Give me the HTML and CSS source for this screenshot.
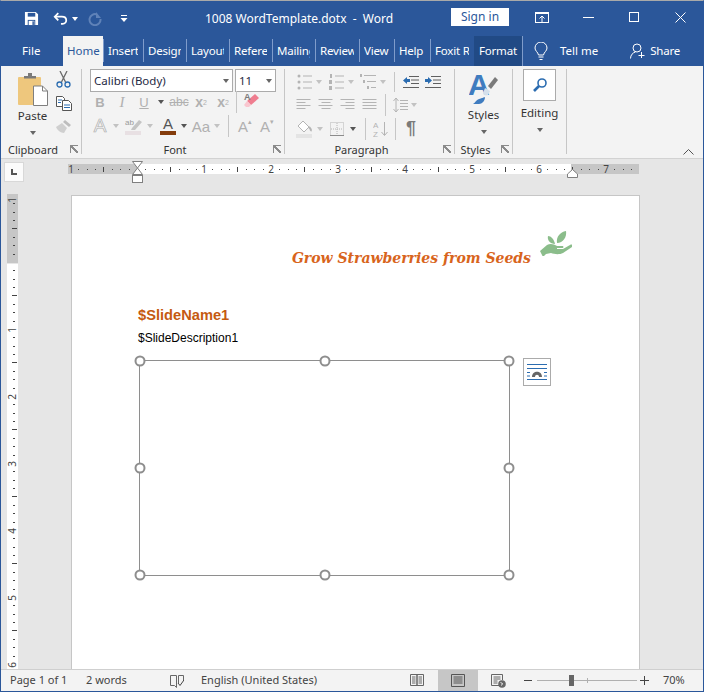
FILE: index.html
```html
<!DOCTYPE html>
<html lang="en">
<head>
    <meta charset="UTF-8">
    <title>1008 WordTemplate.dotx - Word</title>
    <link rel="stylesheet" href="styles.css">
</head>
<body>

<div class="window">

    <!-- title bar -->
    <div class="titlebar">
        <div class="quick">
            <svg class="q-save" width="15" height="15" viewBox="0 0 16 16"><path d="M1 1h11.500L15 3.500V15H1z" fill="#fff"/><rect x="4" y="2" width="8" height="4" fill="#2b579a"/><rect x="4" y="9.500" width="8" height="5.500" fill="#2b579a"/><rect x="5" y="10.500" width="6" height="4.500" fill="#fff"/><rect x="9" y="11" width="1.500" height="4" fill="#2b579a"/></svg>
            <svg class="q-undo" width="15" height="15" viewBox="0 0 17 16"><path d="M6 2L2 6l4 4" fill="none" stroke="#fff" stroke-width="2"/><path d="M2.500 6H10c3.500 0 5 2 5 4s-1.500 4-4 4H9" fill="none" stroke="#fff" stroke-width="2"/></svg>
            <span class="caret caret-white q-undo-caret"></span>
            <svg class="q-redo" width="14" height="14" viewBox="0 0 14 14"><path d="M9 2.500A5.500 5.500 0 1 0 12.500 7" fill="none" stroke="#5f82b8" stroke-width="2"/><path d="M8 0v6h5" fill="#5f82b8"/></svg>
            <svg class="q-more" width="8" height="8" viewBox="0 0 8 8"><rect x="1" y="0" width="6" height="1" fill="#fff"/><path d="M0.500 3h7L4 7z" fill="#fff"/></svg>
        </div>
        <div class="doc-title">1008 WordTemplate.dotx&nbsp; -&nbsp; Word</div>
        <div class="signin">Sign in</div>
        <div class="winctl winctl-ribbon">
            <svg width="14" height="11" viewBox="0 0 14 11"><rect x="0.500" y="0.500" width="13" height="10" fill="none" stroke="#fff"/><rect x="0" y="0" width="14" height="2" fill="#fff"/><path d="M7 10V4M4.500 6.500L7 4l2.500 2.500" fill="none" stroke="#fff"/></svg>
        </div>
        <div class="winctl winctl-min"><svg width="11" height="1" viewBox="0 0 11 1"><rect width="11" height="1" fill="#fff"/></svg></div>
        <div class="winctl winctl-max"><svg width="10" height="10" viewBox="0 0 10 10"><rect x="0.500" y="0.500" width="9" height="9" fill="none" stroke="#fff"/></svg></div>
        <div class="winctl winctl-close"><svg width="11" height="11" viewBox="0 0 11 11"><path d="M0.500 0.500l10 10M10.500 0.500l-10 10" stroke="#fff" fill="none"/></svg></div>
    </div>

    <!-- tabs -->
    <div class="tabs">
        <div class="tab tab-file">File</div>
        <div class="tab tab-home">Home</div>
        <div class="tab w40"><span class="tab-text">Insert</span></div>
        <div class="tab w43"><span class="tab-text">Design</span></div>
        <div class="tab w43"><span class="tab-text">Layout</span></div>
        <div class="tab w43"><span class="tab-text">References</span></div>
        <div class="tab w43"><span class="tab-text">Mailings</span></div>
        <div class="tab w44"><span class="tab-text">Review</span></div>
        <div class="tab w35"><span class="tab-text">View</span></div>
        <div class="tab w36"><span class="tab-text">Help</span></div>
        <div class="tab w44"><span class="tab-text">Foxit Reader</span></div>
        <div class="tab tab-format"><span class="tab-text">Format</span></div>
        <svg class="bulb" width="14" height="19" viewBox="0 0 14 19"><path d="M4.500 13C4 10 1 9 1 6a6 6 0 0 1 12 0c0 3-3 4-3.500 7z" fill="none" stroke="#fff"/><path d="M4.500 15h5M5.500 17.500h3" stroke="#fff" fill="none"/></svg>
        <div class="tell">Tell me</div>
        <svg class="person" width="16" height="16" viewBox="0 0 16 16"><circle cx="7" cy="5" r="4" fill="none" stroke="#fff"/><path d="M0.500 15.500c0-3.500 2.500-6 5-6.500M11.500 9v6M8.500 12.500h6" fill="none" stroke="#fff"/></svg>
        <div class="share">Share</div>
    </div>

    <!-- ribbon -->
    <div class="ribbon">

        <div class="group g-clipboard">
            <div class="group-body clip-body">
                <div class="paste">
                    <svg width="30" height="33" viewBox="0 0 30 33"><rect x="0" y="4" width="23" height="28" rx="1" fill="#eec77d"/><path d="M6 5V3h4V0h4v3h4v2.500H6z" fill="#7a7a7a"/><path d="M15.500 13h9l5 5v14.500h-14z" fill="#fff" stroke="#7f7f7f"/><path d="M24.500 13v5h5" fill="none" stroke="#7f7f7f"/></svg>
                    <div class="big-label">Paste</div>
                    <span class="caret"></span>
                </div>
                <div class="clip-small">
                    <svg width="15" height="17" viewBox="0 0 15 17"><path d="M4 0l5.500 11M11 0L5.500 11" stroke="#6b6b6b" stroke-width="1.300" fill="none"/><circle cx="3.500" cy="13.500" r="2.500" fill="none" stroke="#2b6cb0" stroke-width="1.300"/><circle cx="11.500" cy="13.500" r="2.500" fill="none" stroke="#2b6cb0" stroke-width="1.300"/></svg>
                    <svg width="16" height="15" viewBox="0 0 16 15"><path d="M0.500 0.500h6l2 2v8h-8z" fill="#fff" stroke="#555"/><path d="M6.500 4.500h6l3 3v7h-9z" fill="#fff" stroke="#555"/><path d="M2 4h4M2 6.500h3M8 9h6M8 11.500h6" stroke="#2b6cb0"/></svg>
                    <svg width="16" height="15" viewBox="0 0 16 15"><path d="M9 1l6 5-2 2-6-5z" fill="#bdbdbd"/><path d="M6 4l5 5-3 5c-3 0-7-3-8-6z" fill="#cfcfcf"/></svg>
                </div>
            </div>
            <div class="group-label">Clipboard<span class="launcher"></span></div>
        </div>

        <div class="group g-font">
            <div class="group-body">
                <div class="rib-row font-boxes">
                    <div class="fontbox fb-name"><span>Calibri (Body)</span><span class="caret"></span></div>
                    <div class="fontbox fb-size"><span>11</span><span class="caret"></span></div>
                </div>
                <div class="rib-row font-row2">
                    <span class="cell fmt fmt-b">B</span>
                    <span class="cell fmt fmt-i">I</span>
                    <span class="cell fmt fmt-u">U</span>
                    <span class="caret-cell"><span class="caret caret-dark"></span></span>
                    <span class="cell fmt fmt-abc">abc</span>
                    <span class="cell fmt fmt-sub">x<sub>2</sub></span>
                    <span class="cell fmt fmt-sub">x<sup>2</sup></span>
                    <span class="vsep"></span>
                    <span class="cell">
                        <svg width="18" height="20" viewBox="0 0 18 20"><path d="M8 13l8-7-4-4-8 7z" fill="#ef7d8f"/><path d="M4 9l4 4-2 2H3l-2-2z" fill="#f9c6cf"/><text x="1" y="8" class="ico-text">A</text></svg>
                    </span>
                </div>
                <div class="rib-row font-row3">
                    <span class="cell fmt fmt-outline">A</span>
                    <span class="caret-cell"><span class="caret caret-light"></span></span>
                    <span class="cell cell-ab">
                        <svg width="18" height="18" viewBox="0 0 18 18"><text x="0" y="8" class="ico-small">ab</text><path d="M7 11l7-8 3 2-7 8H6z" fill="#c4c4c4"/><rect x="0" y="14" width="16" height="4" fill="#e8e0e3"/></svg>
                    </span>
                    <span class="caret-cell"><span class="caret caret-light"></span></span>
                    <span class="cell cell-color">
                        <span class="color-a">A</span>
                        <span class="color-bar"></span>
                    </span>
                    <span class="caret-cell"><span class="caret caret-dark"></span></span>
                    <span class="cell fmt fmt-aa">Aa</span>
                    <span class="caret-cell"><span class="caret caret-light"></span></span>
                    <span class="vsep"></span>
                    <span class="cell fmt fmt-grow">A<small>▴</small></span>
                    <span class="cell fmt fmt-shrink">A<small>▾</small></span>
                </div>
            </div>
            <div class="group-label">Font<span class="launcher"></span></div>
        </div>

        <div class="group g-para">
            <div class="group-body">
                <div class="rib-row para-row1">
                    <svg class="p20" width="20" height="16" viewBox="-4 0 20 16"><use href="#i-bullets"/></svg>
                    <span class="caret-cell"><span class="caret caret-light"></span></span>
                    <svg class="p20" width="20" height="16" viewBox="-4 0 20 16"><use href="#i-numbers"/></svg>
                    <span class="caret-cell"><span class="caret caret-light"></span></span>
                    <svg class="p20" width="20" height="16" viewBox="-3 0 20 16"><use href="#i-multi"/></svg>
                    <span class="caret-cell"><span class="caret caret-light"></span></span>
                    <span class="vsep vsep-r1"></span>
                    <svg class="p22" width="16" height="14" viewBox="0 0 16 14"><path d="M6 1.500h10M8 5h8M8 8.500h8M0 12.500h16" stroke="#606060" fill="none"/><path d="M0 5.500L4 2v2h3v3H4v2z" fill="#2b6cb0"/></svg>
                    <svg class="p22" width="16" height="14" viewBox="0 0 16 14"><path d="M6 1.500h10M8 5h8M8 8.500h8M0 12.500h16" stroke="#606060" fill="none"/><path d="M7 5.500L3 2v2H0v3h3v2z" fill="#2b6cb0"/></svg>
                </div>
                <div class="rib-row para-row2">
                    <svg class="p22" width="15" height="12" viewBox="0 0 15 12"><path d="M0 .5h14M0 3.500h9M0 6.500h14M0 9.500h9" stroke="#b4b4b4" fill="none"/></svg>
                    <svg class="p22" width="15" height="12" viewBox="0 0 15 12"><path d="M0 .5h14M3 3.500h9M0 6.500h14M3 9.500h9" stroke="#b4b4b4" fill="none"/></svg>
                    <svg class="p22" width="15" height="12" viewBox="0 0 15 12"><path d="M0 .5h14M5 3.500h9M0 6.500h14M5 9.500h9" stroke="#b4b4b4" fill="none"/></svg>
                    <svg class="p22" width="15" height="12" viewBox="0 0 15 12"><path d="M0 .5h14M0 3.500h14M0 6.500h14M0 9.500h14" stroke="#b4b4b4" fill="none"/></svg>
                    <span class="vsep vsep-r2"></span>
                    <svg class="p-spacing" width="15" height="16" viewBox="0 0 15 16"><path d="M3 1v14M0.500 4L3 1l2.500 3M0.500 12L3 15l2.500-3" stroke="#b4b4b4" fill="none"/><path d="M7 3.500h8M7 6.500h8M7 9.500h8M7 12.500h8" stroke="#b4b4b4" fill="none"/></svg>
                    <span class="caret-cell"><span class="caret caret-light"></span></span>
                </div>
                <div class="rib-row para-row3">
                    <svg class="p20 p-fill" width="16" height="18" viewBox="0 0 16 18"><path d="M7 1l6 6-5 5-6-6z" fill="#fff" stroke="#b4b4b4"/><path d="M13 7c2 2 2.500 3 1.500 4" fill="none" stroke="#b4b4b4" stroke-width="2"/><rect x="0" y="14" width="16" height="4" fill="#e4e4e4"/></svg>
                    <span class="caret-cell"><span class="caret caret-light"></span></span>
                    <svg class="p20 p-table" width="14" height="14" viewBox="0 0 14 14"><rect x="0.500" y="0.500" width="13" height="13" fill="none" stroke="#b4b4b4" stroke-dasharray="1 1"/><path d="M7 1v12M1 7h12" stroke="#b4b4b4" stroke-dasharray="1 1" fill="none"/><path d="M0 13.500h14" stroke="#8c8c8c"/></svg>
                    <span class="caret-cell"><span class="caret caret-dark"></span></span>
                    <span class="vsep vsep-r3"></span>
                    <svg class="p-sort" width="16" height="16" viewBox="0 0 16 16"><text x="0" y="7" class="ico-sort">A</text><text x="0" y="15.500" class="ico-sort">Z</text><path d="M11.500 1v13M8.500 11l3 3.500 3-3.500" stroke="#b4b4b4" fill="none"/></svg>
                    <span class="vsep vsep-r4"></span>
                    <span class="pilcrow">¶</span>
                </div>
            </div>
            <div class="group-label">Paragraph<span class="launcher"></span></div>
        </div>

        <div class="group g-styles">
            <div class="group-body styles-body">
                <svg width="29" height="32" viewBox="0 0 29 32"><text x="-1" y="22" class="ico-bigA">A</text><path d="M19 13l7-9 3 3-7 9z" fill="#7a7a7a"/><path d="M16 15l5 3-2 4c-2 1-5 0-5-2z" fill="#d4e0ec"/><path d="M4 31c2-1 3-4 6-5s6-2 6-2c0 4-3 7-6 7z" fill="#3f7cbf"/></svg>
                <div class="big-label">Styles</div>
                <span class="caret"></span>
            </div>
            <div class="group-label">Styles<span class="launcher"></span></div>
        </div>

        <div class="group g-editing">
            <div class="group-body editing-body">
                <div class="edit-box">
                    <svg width="16" height="16" viewBox="0 0 16 16"><circle cx="10" cy="6" r="4" fill="none" stroke="#2b6cb0" stroke-width="1.600"/><path d="M7 9l-5 5" stroke="#2b6cb0" stroke-width="2.600"/></svg>
                </div>
                <div class="big-label">Editing</div>
                <span class="caret"></span>
            </div>
        </div>

        <svg class="collapse" width="11" height="6" viewBox="0 0 11 6"><path d="M0.500 5.500l5-5 5 5" fill="none" stroke="#555"/></svg>
    </div>

    <!-- ruler + document -->
    <div class="workspace">
        <div class="ruler-row">
            <div class="corner"><span class="corner-l"></span></div>
            <div class="h-ruler">
                <svg width="571" height="10" viewBox="0 0 571 10">
                    <defs>
                        <pattern id="ticks" x="69" y="0" width="67" height="10" patternUnits="userSpaceOnUse">
                            <rect x="8" y="5" width="1" height="1" fill="#444"/>
                            <rect x="17" y="5" width="1" height="1" fill="#444"/>
                            <rect x="25" y="5" width="1" height="1" fill="#444"/>
                            <rect x="33" y="3" width="1" height="5" fill="#444"/>
                            <rect x="42" y="5" width="1" height="1" fill="#444"/>
                            <rect x="50" y="5" width="1" height="1" fill="#444"/>
                            <rect x="59" y="5" width="1" height="1" fill="#444"/>
                        </pattern>
                    </defs>
                    <rect width="571" height="10" fill="#fff"/>
                    <rect width="69" height="10" fill="#c6c6c6"/>
                    <rect x="503" width="68" height="10" fill="#c6c6c6"/>
                    <rect width="571" height="10" fill="url(#ticks)"/>
                    <g class="ruler-num">
                        <text x="3" y="9">1</text><text x="136" y="9">1</text><text x="203" y="9">2</text>
                        <text x="270" y="9">3</text><text x="337" y="9">4</text><text x="404" y="9">5</text>
                        <text x="471" y="9">6</text><text x="538" y="9">7</text>
                    </g>
                </svg>
                <!-- indent markers sit on top of the ruler -->
                <svg class="indent-left" width="11" height="22" viewBox="0 0 11 22"><path d="M.5.500h10L5.500 7z" fill="#fff" stroke="#7f7f7f"/><path d="M5.500 7l5 6.500H.5z" fill="#fff" stroke="#7f7f7f"/><rect x=".5" y="14.500" width="10" height="7" fill="#fff" stroke="#7f7f7f"/></svg>
                <svg class="indent-right" width="11" height="9" viewBox="0 0 11 9"><path d="M5.500.500l5 4.500v3.500H.5V5z" fill="#fff" stroke="#7f7f7f"/></svg>
            </div>
        </div>
        <div class="doc-row">
            <div class="v-ruler">
                <svg width="11" height="475" viewBox="0 0 11 475">
                    <defs>
                        <pattern id="vticks" x="0" y="1" width="11" height="67" patternUnits="userSpaceOnUse">
                            <rect x="6" y="8" width="2" height="1" fill="#444"/>
                            <rect x="6" y="17" width="2" height="1" fill="#444"/>
                            <rect x="6" y="25" width="2" height="1" fill="#444"/>
                            <rect x="5" y="33" width="5" height="1" fill="#444"/>
                            <rect x="6" y="42" width="2" height="1" fill="#444"/>
                            <rect x="6" y="50" width="2" height="1" fill="#444"/>
                            <rect x="6" y="59" width="2" height="1" fill="#444"/>
                        </pattern>
                    </defs>
                    <rect width="11" height="475" fill="#fff"/>
                    <rect width="11" height="69" fill="#c6c6c6"/>
                    <rect y="69" width="11" height="1" fill="#e6e6e6"/>
                    <rect width="11" height="475" fill="url(#vticks)"/>
                    <g class="ruler-num">
                        <text transform="translate(9 6) rotate(-90)">1</text>
                        <text transform="translate(9 136) rotate(-90)">1</text>
                        <text transform="translate(9 203) rotate(-90)">2</text>
                        <text transform="translate(9 270) rotate(-90)">3</text>
                        <text transform="translate(9 337) rotate(-90)">4</text>
                        <text transform="translate(9 404) rotate(-90)">5</text>
                        <text transform="translate(9 471) rotate(-90)">6</text>
                    </g>
                </svg>
            </div>
            <div class="page">
                <div class="page-header">
                    <span class="page-title">Grow Strawberries from Seeds</span>
                    <svg class="plant" width="32" height="25" viewBox="0 0 32 25"><path d="M0 20l7-6c3-2 7-1 10 1h5c2 0 2 2 0 2h-5v1h6l7-4c2-1 3 0 2 2l-9 6c-4 2-9 1-12 0l-5 1-3 3z" fill="#8bbd8b"/><path d="M15 13c-1-5-4-8-7-8-1 4 2 8 7 8z" fill="#8bbd8b"/><path d="M17 12c-1-6 3-11 9-12 1 6-3 12-9 12z" fill="#8bbd8b"/></svg>
                </div>
                <div class="slide-name">$SlideName1</div>
                <div class="slide-desc">$SlideDescription1</div>
                <div class="picture-row">
                    <div class="picture">
                        <span class="handle h-tl"></span><span class="handle h-tc"></span><span class="handle h-tr"></span>
                        <span class="handle h-ml"></span><span class="handle h-mr"></span>
                        <span class="handle h-bl"></span><span class="handle h-bc"></span><span class="handle h-br"></span>
                    </div>
                    <div class="layout-btn">
                        <svg width="20" height="18" viewBox="0 0 20 18"><path d="M0 1.500h20M0 5.500h20M0 16.500h20M0 9.500h3M0 13h3M17 9.500h3M17 13h3" stroke="#2b6cb0" fill="none"/><path d="M5 14c0-7 10-7 10 0h-3c0-3-4-3-4 0z" fill="#666"/></svg>
                    </div>
                </div>
            </div>
        </div>
    </div>

    <!-- status bar -->
    <div class="statusbar">
        <span class="st-text st-page">Page 1 of 1</span>
        <span class="st-text st-words">2 words</span>
        <svg class="st-book" width="14" height="14" viewBox="0 0 14 14"><path d="M6.500 1.500H.5v10h4l2 2zM8.500 9v-7.500h5V7" fill="none" stroke="#666"/><path d="M8 9l2 2.500L14 6" fill="none" stroke="#444"/></svg>
        <span class="st-text st-lang">English (United States)</span>
        <svg class="st-read" width="14" height="13" viewBox="0 0 14 13"><path d="M.5.500h6.500v11H.5zM7 .5h6.500v11H7zM2 3h3.500M2 5h3.500M2 7h3.500M2 9h3.500M8.500 3H12M8.500 5H12M8.500 7H12M8.500 9H12" fill="none" stroke="#666"/></svg>
        <div class="st-print">
            <svg width="14" height="13" viewBox="0 0 14 13"><path d="M.5.500h13v12H.5zM2.500 3h9M2.500 5h9M2.500 7h9M2.500 9h9" fill="none" stroke="#555"/></svg>
        </div>
        <svg class="st-web" width="15" height="14" viewBox="0 0 15 14"><path d="M8 11.500H.5V.5h11V6M2.500 3h7M2.500 5h7M2.500 7h4M2.500 9h4" fill="none" stroke="#666"/><circle cx="11" cy="10" r="3.800" fill="#666"/><path d="M9.500 8.500l2 1-1 2" stroke="#f3f3f3" fill="none"/></svg>
        <span class="zoom-minus"></span>
        <div class="slider"><span class="slider-mid"></span><span class="slider-thumb"></span></div>
        <span class="zoom-plus"></span>
        <span class="st-text st-zoom">70%</span>
    </div>

</div>

<!-- shared icon shapes -->
<svg class="defs" width="0" height="0">
    <defs>
        <g id="i-bullets" fill="#b4b4b4"><circle cx="2" cy="2" r="1.500"/><circle cx="2" cy="8" r="1.500"/><circle cx="2" cy="14" r="1.500"/><rect x="6" y="1.500" width="9" height="1"/><rect x="6" y="7.500" width="9" height="1"/><rect x="6" y="13.500" width="9" height="1"/></g>
        <g id="i-numbers" fill="#b4b4b4"><rect x="1" y="0" width="2" height="4"/><rect x="0" y="6" width="3" height="4"/><rect x="0" y="12" width="3" height="4"/><rect x="6" y="1.500" width="9" height="1"/><rect x="6" y="7.500" width="9" height="1"/><rect x="6" y="13.500" width="9" height="1"/></g>
        <g id="i-multi" fill="#b4b4b4"><rect x="0" y="0" width="2" height="3"/><rect x="3" y="6" width="2" height="3"/><rect x="7" y="12" width="2" height="3"/><rect x="4" y="1" width="12" height="1"/><rect x="7" y="7" width="9" height="1"/><rect x="11" y="13" width="5" height="1"/></g>
    </defs>
</svg>

</body>
</html>
```

FILE: styles.css
```css
* {
    box-sizing: border-box;
}
html, body {
    margin: 0;
    padding: 0;
}
body {
    width: 704px;
    height: 692px;
    overflow: hidden;
    font-family: "Noto Sans", Arial, sans-serif;
    font-size: 11.5px;
    color: #333;
}
.defs {
    position: absolute;
}
.window {
    width: 704px;
    height: 692px;
    display: flex;
    flex-direction: column;
    background-color: #2b579a;
    border: 1px solid #2b579a;
    border-top-color: #a9a9a9;
    overflow: hidden;
}

/* title bar */
.titlebar {
    height: 35px;
    flex: none;
    display: flex;
    align-items: center;
    color: #fff;
    background-color: #2b579a;
}
.quick {
    width: 204px;
    flex: none;
    display: flex;
    align-items: center;
    padding-left: 23px;
}
.q-undo {
    margin-left: 14px;
}
.q-undo-caret {
    margin-left: 4px;
}
.q-redo {
    margin-left: 10px;
}
.q-more {
    margin-left: 18px;
}
.doc-title {
    width: 246px;
    flex: none;
    font-size: 12px;
    white-space: nowrap;
}
.signin {
    width: 58px;
    height: 18px;
    flex: none;
    line-height: 17px;
    text-align: center;
    font-size: 12px;
    color: #2b579a;
    background-color: #fff;
    margin-bottom: 3px;
}
.winctl {
    flex: none;
    display: flex;
    justify-content: center;
    margin-bottom: 3px;
}
.winctl-ribbon {
    margin-left: 26px;
    width: 14px;
}
.winctl-min {
    margin-left: 34px;
    width: 11px;
}
.winctl-max {
    margin-left: 35px;
    width: 10px;
}
.winctl-close {
    margin-left: 36px;
    width: 11px;
}

/* tabs */
.tabs {
    height: 30px;
    flex: none;
    display: flex;
    align-items: stretch;
    color: #fff;
    background-color: #2b579a;
}
.tab {
    flex: none;
    padding: 7px 5px 0 5px;
    position: relative;
    font-size: 11.5px;
    white-space: nowrap;
}
.tab::before {
    content: "";
    position: absolute;
    left: 0;
    top: 3px;
    height: 23px;
    width: 1px;
    background-color: #7f9ccb;
}
.tab-text {
    display: block;
    overflow: hidden;
    letter-spacing: -0.2px;
}
.tab-file {
    width: 62px;
    padding-left: 21px;
}
.tab-home {
    width: 40px;
    padding-left: 4px;
    color: #2b579a;
    background-color: #f3f3f3;
}
.tab-file::before, .tab-home::before {
    display: none;
}
.w35 { width: 35px; }
.w36 { width: 36px; }
.w40 { width: 40px; }
.w43 { width: 43px; }
.w44 { width: 44px; }
.tab-format {
    width: 49px;
    padding-right: 3px;
    background-color: #214a85;
    border-right: 1px solid #7f9ccb;
}
.tab-format::before {
    display: none;
}
.bulb {
    margin: 6px 0 0 11px;
}
.tell {
    margin-left: 12px;
    padding-top: 7px;
}
.person {
    margin: 7px 0 0 32px;
}
.share {
    margin-left: 4px;
    padding-top: 7px;
    letter-spacing: -0.2px;
}

/* ribbon */
.ribbon {
    height: 93px;
    flex: none;
    display: flex;
    position: relative;
    padding-top: 3px;
    background-color: #f3f3f3;
    border-bottom: 1px solid #d2d2d2;
}
.group {
    height: 85px;
    flex: none;
    display: flex;
    flex-direction: column;
    border-right: 1px solid #c6c6c6;
}
.group-body {
    height: 74px;
    flex: none;
}
.group-label {
    position: relative;
    height: 11px;
    line-height: 13px;
    text-align: center;
    font-size: 11px;
    color: #333;
    padding-right: 16px;
}
.launcher {
    position: absolute;
    right: 3px;
    top: 2px;
    width: 8px;
    height: 8px;
    border-left: 1px solid #8a8a8a;
    border-top: 1px solid #8a8a8a;
    background: linear-gradient(45deg, transparent 0 42%, #8a8a8a 42% 58%, transparent 58%);
}
.g-clipboard { width: 81px; }
.g-font { width: 203px; }
.g-para { width: 170px; }
.g-styles { width: 58px; }
.g-editing { width: 54px; }
.clip-body {
    display: flex;
}
.paste {
    width: 54px;
    flex: none;
    display: flex;
    flex-direction: column;
    align-items: center;
    padding: 4px 0 0 9px;
}
.clip-small {
    width: 17px;
    display: flex;
    flex-direction: column;
    align-items: center;
    gap: 8px;
    padding-top: 2px;
}
.big-label {
    font-size: 11.500px;
    line-height: 14px;
    margin-top: 3px;
    color: #333;
}
.caret {
    display: inline-block;
    width: 0;
    height: 0;
    flex: none;
    border-left: 3.500px solid transparent;
    border-right: 3.500px solid transparent;
    border-top: 4px solid #666;
}
.paste .caret, .styles-body .caret, .editing-body .caret {
    margin-top: 8px;
}
.caret-white {
    border-top-color: #fff;
}
.caret-light {
    border-top-color: #c2c2c2;
}
.caret-dark {
    border-top-color: #555;
}
.caret-cell {
    width: 12px;
    flex: none;
    display: flex;
    justify-content: center;
    align-items: center;
}
.rib-row {
    display: flex;
    align-items: center;
    flex: none;
}
.cell {
    width: 22px;
    height: 22px;
    flex: none;
    display: flex;
    justify-content: center;
    align-items: center;
}
.vsep {
    width: 1px;
    height: 22px;
    flex: none;
    background-color: #c6c6c6;
}

/* font group */
.font-boxes {
    height: 23px;
    padding-left: 8px;
    gap: 2px;
}
.fontbox {
    height: 23px;
    display: flex;
    justify-content: space-between;
    align-items: center;
    padding: 0 3px;
    background-color: #fff;
    border: 1px solid #ababab;
    color: #1f2a44;
    font-size: 11.500px;
}
.fb-name { width: 143px; }
.fb-size { width: 41px; }
.font-row2 {
    height: 20px;
    padding-left: 7px;
}
.font-row3 {
    height: 24px;
    margin-top: 2px;
    padding-left: 7px;
}
.fmt {
    font-family: "Liberation Sans", Arial, sans-serif;
    font-size: 13px;
    font-weight: bold;
    color: #b0b0b0;
}
.fmt-i {
    font-family: "Liberation Serif", serif;
    font-style: italic;
    font-size: 15px;
    font-weight: normal;
}
.fmt-u {
    font-weight: normal;
    text-decoration: underline;
}
.fmt-abc {
    font-weight: normal;
    font-size: 12px;
    text-decoration: line-through;
    margin-left: 1px;
}
.fmt-sub {
    font-size: 14px;
}
.fmt-sub sub, .fmt-sub sup {
    font-size: 7px;
    font-weight: normal;
}
.font-row2 .vsep {
    margin: 0 4px 0 2px;
}
.ico-text {
    font: bold 9px "Liberation Sans", sans-serif;
    fill: #7a7a7a;
}
.ico-small {
    font: 8px "Liberation Sans", sans-serif;
    fill: #9a9a9a;
}
.ico-sort {
    font: 8px "Liberation Sans", sans-serif;
    fill: #b4b4b4;
}
.ico-bigA {
    font: bold 30px "Liberation Sans", sans-serif;
    fill: #3f7cbf;
}
.fmt-outline {
    font-size: 19px;
    color: #fbfbfb;
    -webkit-text-stroke: 0.700px #b0b0b0;
    font-weight: normal;
}
.font-row3 .caret-cell {
    width: 10px;
}
.cell-ab {
    margin-left: 2px;
}
.cell-color {
    flex-direction: column;
    margin-left: 2px;
}
.color-a {
    font: 15px/14px "Liberation Sans", sans-serif;
    color: #555;
}
.color-bar {
    width: 16px;
    height: 4px;
    background-color: #843c0c;
}
.fmt-aa {
    font-size: 15px;
    font-weight: normal;
    margin-left: 1px;
}
.fmt-grow, .fmt-shrink {
    font-size: 15px;
    font-weight: normal;
}
.fmt-grow small, .fmt-shrink small {
    font-size: 7px;
    margin-bottom: 8px;
}
.font-row3 .vsep {
    margin: 0 5px 0 6px;
}

/* paragraph group */
.g-para .group-body {
    padding: 1px 0 0 8px;
}
.para-row1, .para-row2, .para-row3 {
    height: 23.500px;
}
.p20 {
    width: 20px;
    flex: none;
}
.p22 {
    width: 22px;
    flex: none;
}
.p-fill {
    margin-left: 1px;
}
.p-table {
    margin-left: 1px;
}
.p-spacing {
    flex: none;
}
.vsep-r1 {
    margin: 0 5px 0 5px;
    height: 20px;
}
.vsep-r2 {
    margin: 0 7px 0 4px;
}
.vsep-r3 {
    margin: 0 7px 0 6px;
}
.vsep-r4 {
    margin: 0 10px 0 6px;
}
.p-sort {
    flex: none;
}
.pilcrow {
    font: bold 18px "Liberation Sans", sans-serif;
    color: #7a7a7a;
}

/* styles, editing */
.styles-body, .editing-body {
    display: flex;
    flex-direction: column;
    align-items: center;
}
.styles-body {
    padding-top: 4px;
}
.edit-box {
    width: 33px;
    height: 32px;
    display: flex;
    justify-content: center;
    align-items: center;
    background-color: #fff;
    border: 1px solid #ababab;
}
.editing-body .big-label {
    margin-top: 5px;
}
.collapse {
    position: absolute;
    right: 9px;
    bottom: 3px;
}

/* workspace */
.workspace {
    height: 510px;
    flex: none;
    display: flex;
    flex-direction: column;
    background-color: #e6e6e6;
}
.ruler-row {
    height: 35px;
    flex: none;
    display: flex;
    padding: 5px 0 0 4px;
}
.corner {
    width: 18px;
    height: 18px;
    margin-top: -1px;
    display: flex;
    justify-content: center;
    align-items: center;
    background-color: #fbfbfb;
    box-shadow: 0 0 0 1px #d8d8d8;
}
.corner-l {
    width: 6px;
    height: 6px;
    border-left: 2px solid #555;
    border-bottom: 2px solid #555;
}
.h-ruler {
    position: relative;
    margin-left: 45px;
    height: 10px;
    width: 571px;
    line-height: 0;
}
.ruler-num {
    font: 10px "Noto Sans", sans-serif;
    fill: #444;
    text-anchor: middle;
}
.indent-left {
    position: absolute;
    left: 64px;
    top: -3px;
}
.indent-right {
    position: absolute;
    left: 499px;
    top: 5px;
}
.doc-row {
    flex: 1;
    min-height: 0;
    display: flex;
    align-items: flex-start;
}
.v-ruler {
    width: 70px;
    flex: none;
    padding-left: 6px;
    line-height: 0;
}
.page {
    width: 569px;
    height: 475px;
    flex: none;
    margin-top: 1px;
    padding: 37px 0 0 66px;
    background-color: #fff;
    border: 1px solid #c6c6c6;
    border-bottom: 0;
}
.page-header {
    height: 33px;
    display: flex;
    align-items: flex-end;
    justify-content: flex-end;
    padding-right: 67px;
}
.page-title {
    font-family: "DejaVu Serif", serif;
    font-style: italic;
    font-weight: bold;
    font-size: 14px;
    color: #d8641c;
    line-height: 18px;
    margin-bottom: -1px;
}
.plant {
    margin: 0 0 10px 9px;
}
.slide-name {
    font-family: "Liberation Sans", Arial, sans-serif;
    font-weight: bold;
    font-size: 14.670px;
    color: #c55a11;
    line-height: 17px;
    margin-top: 41px;
}
.slide-desc {
    font-family: "Liberation Sans", Arial, sans-serif;
    font-size: 12px;
    color: #000;
    line-height: 14px;
    margin-top: 7px;
}
.picture-row {
    display: flex;
    align-items: flex-start;
    margin-top: 15px;
    padding-left: 1px;
}
.picture {
    position: relative;
    width: 371px;
    height: 216px;
    flex: none;
    border: 1px solid #8e8e8e;
}
.handle {
    position: absolute;
    width: 11px;
    height: 11px;
    background-color: #fff;
    border: 2px solid #8e8e8e;
    border-radius: 50%;
    transform: translate(-50%, -50%);
}
.h-tl { left: 0; top: 0; }
.h-tc { left: 50%; top: 0; }
.h-tr { left: 100%; top: 0; }
.h-ml { left: 0; top: 50%; }
.h-mr { left: 100%; top: 50%; }
.h-bl { left: 0; top: 100%; }
.h-bc { left: 50%; top: 100%; }
.h-br { left: 100%; top: 100%; }
.layout-btn {
    width: 28px;
    height: 28px;
    flex: none;
    margin: -2px 0 0 13px;
    display: flex;
    justify-content: center;
    align-items: center;
    background-color: #fff;
    border: 1px solid #ababab;
}

/* status bar */
.statusbar {
    flex: 1;
    min-height: 0;
    display: flex;
    align-items: center;
    background-color: #f3f3f3;
    border-top: 1px solid #cfcfcf;
    font-size: 11px;
    color: #444;
}
.st-text {
    margin-bottom: 2px;
}
.st-page {
    margin-left: 9px;
    width: 76px;
    flex: none;
}
.st-words {
    width: 84px;
    flex: none;
}
.st-book {
    flex: none;
}
.st-lang {
    margin-left: 17px;
    width: 209px;
    flex: none;
    white-space: nowrap;
}
.st-read {
    flex: none;
}
.st-print {
    width: 40px;
    height: 100%;
    flex: none;
    margin-left: 14px;
    display: flex;
    justify-content: center;
    align-items: center;
    background-color: #c6c6c6;
}
.st-web {
    flex: none;
    margin-left: 13px;
}
.zoom-minus {
    width: 8px;
    height: 1px;
    flex: none;
    margin-left: 18px;
    background-color: #444;
}
.slider {
    position: relative;
    width: 100px;
    height: 1px;
    flex: none;
    margin-left: 5px;
    background-color: #b0b0b0;
}
.slider-mid {
    position: absolute;
    left: 50px;
    top: -2px;
    width: 1px;
    height: 5px;
    background-color: #b0b0b0;
}
.slider-thumb {
    position: absolute;
    left: 32px;
    top: -5px;
    width: 5px;
    height: 11px;
    background-color: #666;
}
.zoom-plus {
    position: relative;
    width: 9px;
    height: 1px;
    flex: none;
    margin-left: 3px;
    background-color: #444;
}
.zoom-plus::after {
    content: "";
    position: absolute;
    left: 4px;
    top: -4px;
    width: 1px;
    height: 9px;
    background-color: #444;
}
.st-zoom {
    margin-left: 14px;
}
```
